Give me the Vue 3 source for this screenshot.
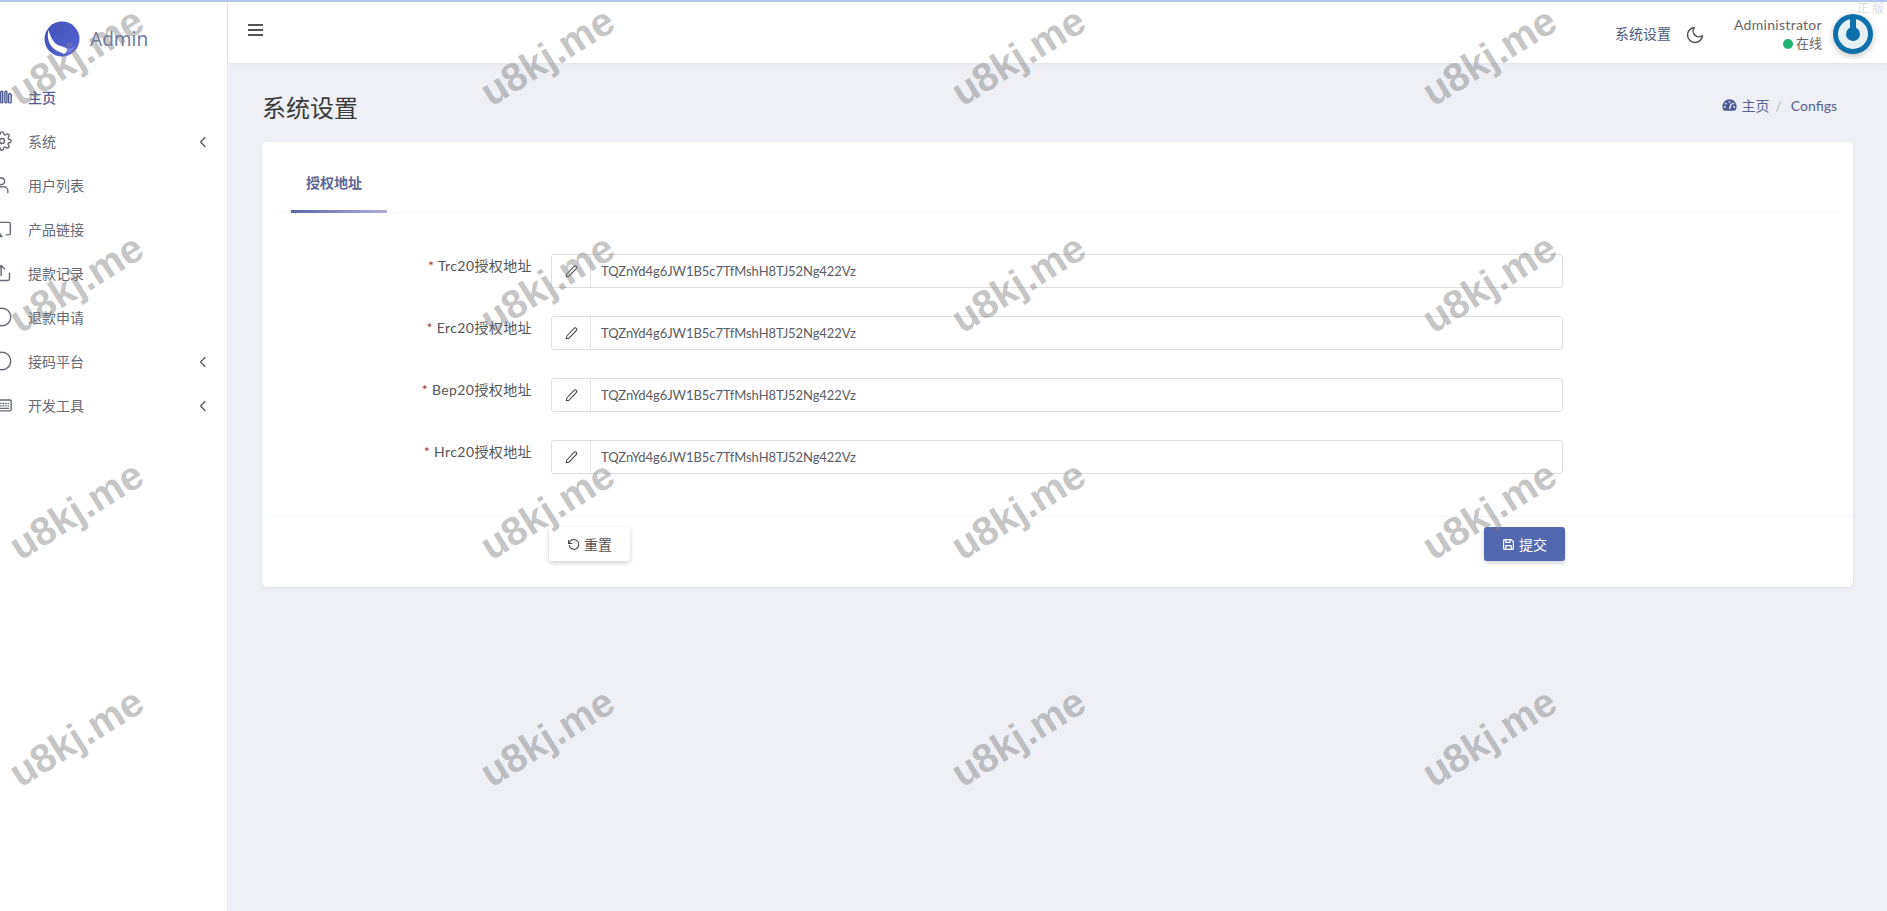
<script setup>
const menu = [
  { label: '主页', icon: 'bars', active: true },
  { label: '系统', icon: 'gear', arrow: true },
  { label: '用户列表', icon: 'user' },
  { label: '产品链接', icon: 'image' },
  { label: '提款记录', icon: 'upload' },
  { label: '退款申请', icon: 'circle' },
  { label: '接码平台', icon: 'circle', arrow: true },
  { label: '开发工具', icon: 'keyboard', arrow: true }
]
const fields = [
  { label: 'Trc20授权地址', value: 'TQZnYd4g6JW1B5c7TfMshH8TJ52Ng422Vz' },
  { label: 'Erc20授权地址', value: 'TQZnYd4g6JW1B5c7TfMshH8TJ52Ng422Vz' },
  { label: 'Bep20授权地址', value: 'TQZnYd4g6JW1B5c7TfMshH8TJ52Ng422Vz' },
  { label: 'Hrc20授权地址', value: 'TQZnYd4g6JW1B5c7TfMshH8TJ52Ng422Vz' }
]
const marks = Array.from({ length: 16 }, (_, i) => i)
</script>

<template>
  <div class="page">
    <aside class="sidebar">
      <div class="brand">
        <svg class="logo" viewBox="0 0 36 36">
          <defs>
            <linearGradient id="lg" x1="0" y1="0" x2="1" y2="1">
              <stop offset="0" stop-color="#3f51b5" />
              <stop offset="1" stop-color="#5a63d8" />
            </linearGradient>
          </defs>
          <circle cx="18" cy="18" r="17.500" fill="url(#lg)" />
          <path d="M4.500 9C3 15 4 22 9 27c3 3 8 4 11 6 3-2 4-4 3-5.500C19 25 14 25 11 22 8 19 6 14 4.500 9Z" fill="#fff" />
          <path d="M23 27c3 1 7 0 9-3-2 5-6 8-10 9 2-2 2-4 1-6Z" fill="#7a80e8" />
        </svg>
        <span class="brand-name">Admin</span>
      </div>
      <nav class="menu">
        <a v-for="item in menu" :key="item.label" class="menu-item" :class="{ active: item.active }">
          <svg class="menu-icon" viewBox="0 0 24 24" fill="none" stroke="currentColor" stroke-width="1.700" stroke-linecap="round" stroke-linejoin="round">
            <template v-if="item.icon === 'bars'">
              <rect x="10.500" y="5" width="2.400" height="14" rx="1" />
              <rect x="15.500" y="5" width="2.400" height="14" rx="1" />
              <rect x="20" y="8" width="3" height="11" rx="1" />
            </template>
            <template v-else-if="item.icon === 'gear'">
              <circle cx="12" cy="12" r="3" />
              <path d="M19.400 15a1.700 1.700 0 0 0 .3 1.800l.1.1a2 2 0 1 1-2.900 2.900l-.1-.1a1.700 1.700 0 0 0-2.900 1.200V21a2 2 0 1 1-4 0v-.1a1.700 1.700 0 0 0-2.900-1.200l-.1.1a2 2 0 1 1-2.900-2.900l.1-.1a1.700 1.700 0 0 0-1.200-2.900H3a2 2 0 1 1 0-4h.1a1.700 1.700 0 0 0 1.200-2.900l-.1-.1a2 2 0 1 1 2.900-2.900l.1.1a1.700 1.700 0 0 0 2.900-1.200V3a2 2 0 1 1 4 0v.1a1.700 1.700 0 0 0 2.900 1.200l.1-.1a2 2 0 1 1 2.900 2.900l-.1.1a1.700 1.700 0 0 0 1.200 2.900H21a2 2 0 1 1 0 4h-.1a1.700 1.700 0 0 0-1.500 1Z" />
            </template>
            <template v-else-if="item.icon === 'user'">
              <circle cx="11" cy="7.500" r="4" />
              <path d="M3 21v-2a5 5 0 0 1 5-5h6a5 5 0 0 1 5 5v2" />
            </template>
            <template v-else-if="item.icon === 'image'">
              <path d="M4 4h16a2 2 0 0 1 2 2v11a2 2 0 0 1-2 2h-3" />
              <path d="M7 15l5 6H3Z" />
            </template>
            <template v-else-if="item.icon === 'upload'">
              <path d="M11 15V3M7 7l4-4 4 4" />
              <path d="M3 12v7a2 2 0 0 0 2 2h14a2 2 0 0 0 2-2v-7" />
            </template>
            <template v-else-if="item.icon === 'circle'">
              <circle cx="12" cy="12" r="10.500" />
            </template>
            <template v-else>
              <rect x="1" y="6" width="22" height="13" rx="1.500" />
              <path d="M10 10h1M13 10h1M16 10h1M19 10h1M10 13h1M13 13h1M16 13h1M19 13h1M8 16h12" stroke-width="1.500" />
            </template>
          </svg>
          <span class="menu-label">{{ item.label }}</span>
          <svg v-if="item.arrow" class="chevron" viewBox="0 0 8 12" fill="none" stroke="currentColor" stroke-width="1.200" stroke-linecap="round" stroke-linejoin="round">
            <path d="M6 1.500 1.500 6 6 10.500" />
          </svg>
        </a>
      </nav>
    </aside>

    <div class="main">
      <header class="navbar">
        <button class="burger" type="button"><span></span><span></span><span></span></button>
        <div class="nav-right">
          <span class="nav-link">系统设置</span>
          <svg class="moon" viewBox="0 0 24 24" fill="none" stroke="#555" stroke-width="1.800" stroke-linecap="round" stroke-linejoin="round">
            <path d="M21 12.800A9 9 0 1 1 11.200 3 7 7 0 0 0 21 12.800Z" />
          </svg>
          <div class="user">
            <div class="user-name">Administrator</div>
            <div class="user-status"><i class="dot"></i>在线</div>
          </div>
          <div class="avatar">
            <svg viewBox="0 0 40 40">
              <circle cx="20" cy="20" r="20" fill="#0f6fa8" />
              <circle cx="20" cy="20" r="11" fill="none" stroke="#e6f0f6" stroke-width="8" />
              <path d="M20 4v15" stroke="#0f6fa8" stroke-width="6" stroke-linecap="round" />
            </svg>
          </div>
        </div>
        <span class="corner-note">正 版</span>
      </header>

      <main class="content">
        <div class="page-head">
          <h1 class="title">系统设置</h1>
          <ol class="crumbs">
            <li class="crumb-home">
              <svg viewBox="0 0 16 14" class="gauge">
                <path d="M8 1a7.500 7.500 0 0 0-6.500 11.300c.2.400.6.700 1 .7h11c.4 0 .8-.3 1-.7A7.500 7.500 0 0 0 8 1Z" fill="#4f5c93" />
                <circle cx="8" cy="3.600" r="1" fill="#eef0f6" />
                <circle cx="4" cy="5.500" r="1" fill="#eef0f6" />
                <circle cx="12" cy="5.500" r="1" fill="#eef0f6" />
                <circle cx="3" cy="9" r="1" fill="#eef0f6" />
                <circle cx="13" cy="9" r="1" fill="#eef0f6" />
                <path d="M8 11 10 5.500" stroke="#eef0f6" stroke-width="1.400" />
              </svg>
              主页
            </li>
            <li class="sep">/</li>
            <li class="crumb-cur">Configs</li>
          </ol>
        </div>

        <section class="card">
          <div class="tabs">
            <span class="tab">授权地址</span>
          </div>
          <form class="form" @submit.prevent>
            <div v-for="f in fields" :key="f.label" class="row">
              <label class="label"><em>*</em> {{ f.label }}</label>
              <div class="group">
                <span class="addon">
                  <svg viewBox="0 0 24 24" fill="none" stroke="#444" stroke-width="1.700" stroke-linejoin="round">
                    <path d="M16.500 3.500a2.500 2.500 0 0 1 3.500 3.500L8 19.500 3.500 20.500 4.500 16Z" />
                  </svg>
                </span>
                <input class="input" :value="f.value" readonly />
              </div>
            </div>
          </form>
          <div class="footer">
            <button class="btn btn-reset" type="button">
              <svg viewBox="0 0 24 24" fill="none" stroke="#444" stroke-width="2" stroke-linecap="round" stroke-linejoin="round">
                <path d="M3 4v6h6" />
                <path d="M4 14a9 9 0 1 0 1.500-7.500L3 10" />
              </svg>
              重置
            </button>
            <button class="btn btn-submit" type="button">
              <svg viewBox="0 0 24 24" fill="none" stroke="#fff" stroke-width="2.200" stroke-linejoin="round">
                <path d="M5 3h12l4 4v12a2 2 0 0 1-2 2H5a2 2 0 0 1-2-2V5a2 2 0 0 1 2-2Z" />
                <path d="M7 21v-7h10v7M7 3v5h8V3" />
              </svg>
              提交
            </button>
          </div>
        </section>
      </main>
    </div>

    <div class="watermarks" aria-hidden="true">
      <span v-for="m in marks" :key="m" class="mark">u8kj.me</span>
    </div>
  </div>
</template>

<style>
html, body { margin: 0; background: #eef0f6; }
</style>

<style scoped>
.page {
  position: relative;
  display: flex;
  height: 909px;
  overflow: hidden;
  border-top: 2px solid #b4c6ea;
  background: #eef0f6;
  font-family: "Lato", "Noto Sans CJK SC", sans-serif;
  font-size: 13px;
  color: #4e5155;
}
.sidebar {
  flex: 0 0 227px;
  background: #fff;
  border-right: 1px solid #e6e8f0;
  overflow: hidden;
}
.brand {
  display: flex;
  align-items: center;
  height: 73px;
  padding-left: 44px;
  box-sizing: border-box;
}
.logo { width: 36px; height: 36px; }
.brand-name {
  margin-left: 10px;
  font-family: "Noto Sans", sans-serif;
  font-size: 19px;
  color: #6f7ca0;
}
.menu { display: flex; flex-direction: column; }
.menu-item {
  display: flex;
  align-items: center;
  height: 44px;
  margin-left: -8px;
  color: #666a75;
  font-size: 14px;
}
.menu-item.active { color: #4f5c93; font-weight: 500; }
.menu-icon { flex: none; width: 20px; height: 20px; margin-right: 16px; }
.menu-label { flex: 1; }
.chevron { flex: none; width: 8px; height: 12px; margin-right: 20px; margin-top: 2px; color: #555; }

.main { flex: 1; min-width: 0; display: flex; flex-direction: column; }
.navbar {
  position: relative;
  display: flex;
  align-items: center;
  justify-content: space-between;
  height: 61px;
  flex: none;
  padding: 0 14px 0 20px;
  background: #fff;
  box-shadow: 0 1px 3px rgba(60, 70, 110, .08);
}
.burger {
  display: flex;
  flex-direction: column;
  gap: 3px;
  width: 15px;
  padding: 0;
  margin-top: -6px;
  border: 0;
  background: none;
}
.burger span { display: block; height: 2px; background: #555; }
.nav-right { display: flex; align-items: center; }
.nav-link { font-size: 14px; color: #4f5c7c; margin-top: 1px; }
.moon { width: 20px; height: 20px; margin-left: 14px; margin-top: 5px; }
.user { margin-left: 29px; text-align: right; margin-right: 11px; margin-top: 3px; }
.user-name { font-size: 14px; line-height: 19px; color: #666; letter-spacing: .3px; }
.user-status { display: flex; align-items: center; justify-content: flex-end; font-size: 13px; line-height: 19px; color: #666; }
.dot { width: 10px; height: 10px; border-radius: 50%; background: #21b573; margin-right: 3px; }
.avatar { width: 40px; height: 40px; margin-top: 2px; border-radius: 50%; box-shadow: 0 2px 6px rgba(0, 0, 0, .25); }
.avatar svg { display: block; width: 40px; height: 40px; }
.corner-note {
  position: absolute;
  top: 0;
  right: 3px;
  font-size: 12px;
  line-height: 14px;
  color: #dcdcdc;
}

.content { flex: 1; padding: 0 34px; }
.page-head {
  display: flex;
  align-items: center;
  justify-content: space-between;
  height: 79px;
  padding: 7px 16px 0 0;
  box-sizing: border-box;
}
.title { margin: 0; font-size: 24px; font-weight: 400; color: #3a3a3a; }
.crumbs { display: flex; align-items: center; margin: -2px 0 0; padding: 0; list-style: none; font-size: 14px; color: #566194; }
.crumb-home { display: flex; align-items: center; gap: 4px; }
.gauge { width: 15px; height: 14px; }
.sep { margin: 0 9px 0 6px; color: #bbb; }

.card {
  background: #fff;
  border-radius: 5px;
  box-shadow: 0 1px 3px rgba(60, 70, 110, .1);
  height: 445px;
  box-sizing: border-box;
}
.tabs {
  height: 70px;
  margin: 0 13px;
  border-bottom: 1px solid #f5f6f8;
  padding-left: 16px;
  display: flex;
}
.tab {
  width: 96px;
  height: 70px;
  box-sizing: border-box;
  padding: 31px 0 0 15px;
  font-size: 14px;
  font-weight: 700;
  color: #5c6796;
  line-height: 20px;
  position: relative;
}
.tab::after {
  content: "";
  position: absolute;
  left: 0;
  right: 0;
  bottom: -1px;
  height: 3px;
  background: linear-gradient(90deg, #5a67a6, #b0add8);
}
.form { padding: 41px 0 0; display: flex; flex-direction: column; gap: 28px; }
.row { display: flex; align-items: flex-start; height: 34px; }
.label {
  width: 270px;
  flex: none;
  margin: 1px 19px 0 0;
  text-align: right;
  font-size: 14px;
  line-height: 22px;
  letter-spacing: .4px;
  color: #555;
}
.label em { font-style: normal; color: #9a3b44; }
.group { display: flex; width: 1012px; height: 34px; box-sizing: border-box; border: 1px solid #dedede; border-radius: 3px; }
.addon {
  display: flex;
  align-items: center;
  justify-content: center;
  width: 38px;
  flex: none;
  border-right: 1px solid #e0e0e0;
}
.addon svg { width: 15px; height: 15px; }
.input {
  flex: 1;
  min-width: 0;
  border: 0;
  outline: 0;
  padding: 0 10px;
  font: inherit;
  font-size: 13px;
  letter-spacing: -.07px;
  color: #5a5d63;
  background: transparent;
}
.footer {
  display: flex;
  justify-content: space-between;
  margin-top: 42px;
  padding: 11px 0 0 287px;
  width: 1016px;
  position: relative;
}
.footer::before {
  content: "";
  position: absolute;
  left: 0;
  top: 0;
  width: 1591px;
  border-top: 1px solid #f3f4f7;
}
.btn {
  display: flex;
  align-items: center;
  justify-content: center;
  gap: 4px;
  height: 34px;
  width: 81px;
  border: 0;
  border-radius: 3px;
  font: inherit;
  font-size: 14px;
}
.btn svg { width: 13px; height: 13px; }
.btn-reset { background: #fff; color: #555; box-shadow: 0 2px 5px rgba(0, 0, 0, .18); }
.btn-submit { background: #5468b0; color: #fff; box-shadow: 0 2px 4px rgba(60, 70, 130, .25); }

.watermarks {
  position: absolute;
  left: -2px;
  top: -60px;
  width: 1887px;
  display: grid;
  grid-template-columns: repeat(4, 471px);
  grid-auto-rows: 227px;
  pointer-events: none;
}
.mark {
  align-self: center;
  width: 156px;
  text-align: center;
  transform: rotate(-32deg);
  font-family: "Liberation Sans", sans-serif;
  font-size: 40px;
  line-height: 24px;
  font-weight: 700;
  color: rgba(125, 125, 125, .45);
  white-space: nowrap;
}
</style>
